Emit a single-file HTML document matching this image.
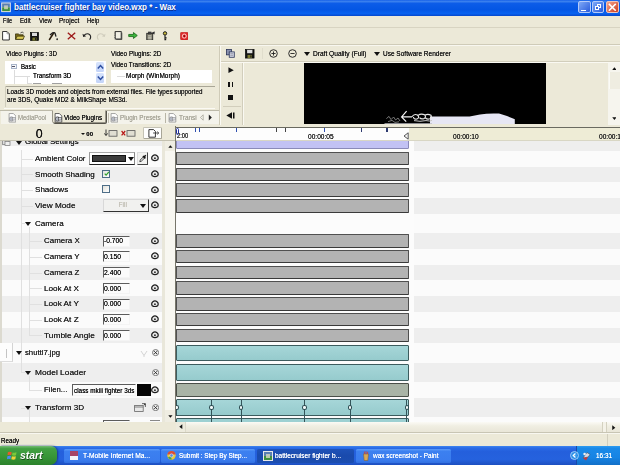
<!DOCTYPE html>
<html>
<head>
<meta charset="utf-8">
<style>
html,body{margin:0;padding:0;}
body{width:620px;height:465px;overflow:hidden;position:relative;background:#ece9d8;font-family:"Liberation Sans",sans-serif;font-size:7px;color:#1a1a1a;}
.a{position:absolute;}
.t{position:absolute;white-space:nowrap;line-height:1;font-size:7px;text-shadow:0 0 0.15px currentColor;}
#all{position:absolute;left:0;top:0;width:620px;height:465px;overflow:hidden;filter:blur(0.45px);}
.bar{position:absolute;left:176px;width:232.6px;border:1px solid #505050;border-bottom:1.4px solid #3a3a3a;border-radius:1px;background:#b3b3b3;box-sizing:border-box;}
.inp{position:absolute;left:103px;width:27px;height:11px;background:#fbfbfb;border-top:1px solid #5c5c5c;border-left:1px solid #5c5c5c;border-right:1px solid #f4f4f4;border-bottom:1px solid #f4f4f4;box-sizing:border-box;}
.lbl{position:absolute;white-space:nowrap;line-height:1;font-size:7.4px;color:#222;}
.dot{position:absolute;border-top:1px solid #e0e0e0;height:0;}
.vdot{position:absolute;border-left:1px solid #e0e0e0;width:0;}
.tri{position:absolute;width:0;height:0;border-left:3.3px solid transparent;border-right:3.3px solid transparent;border-top:4px solid #111;}
</style>
</head>
<body>
<div id="all">

<div class="a" style="left:0;top:0;width:620px;height:15.8px;background:linear-gradient(#1660e8 0%,#3a80ee 9%,#0c5ce8 22%,#0456e4 60%,#0862f0 84%,#0648cc 100%);"></div>
<svg class="a" style="left:1.1px;top:2px" width="10" height="10.6" viewBox="0 0 10 11"><rect x="0" y="0.5" width="10" height="10" fill="#e8e8e8"/><rect x="1" y="1.5" width="8" height="4" fill="#5a7fb0"/><rect x="1" y="5.5" width="8" height="4" fill="#3f8f3f"/><rect x="3" y="3.5" width="4" height="4" fill="#d8d8c0" opacity="0.8"/></svg>
<div class="t" style="left:13.70px;top:3.82px;font-size:8.2px;color:#fff;font-weight:bold;text-shadow:0.5px 0.5px 0 #0a2a8a;"><span style="display:inline-block;transform:scaleX(0.9845);transform-origin:0 0;">battlecruiser fighter bay video.wxp * - Wax</span></div>
<div class="a" style="left:578px;top:0.9px;width:12.6px;height:12.5px;border-radius:2px;box-sizing:border-box;border:0.9px solid #b4caf8;background:linear-gradient(135deg,#7ea8f6,#2a5cdc);"></div>
<div class="a" style="left:581px;top:9.6px;width:4.6px;height:1.7px;background:#fff;"></div>
<div class="a" style="left:591.7px;top:0.9px;width:12.6px;height:12.5px;border-radius:2px;box-sizing:border-box;border:0.9px solid #b4caf8;background:linear-gradient(135deg,#7ea8f6,#2a5cdc);"></div>
<div class="a" style="left:596.6px;top:4px;width:4.2px;height:3.8px;border:1px solid #fff;border-top-width:1.6px;box-sizing:border-box;"></div><div class="a" style="left:594.6px;top:6.4px;width:4.2px;height:4px;border:1px solid #fff;border-top-width:1.6px;box-sizing:border-box;background:#3a6ae0;"></div>
<div class="a" style="left:606px;top:0.9px;width:12.6px;height:12.5px;border-radius:2px;box-sizing:border-box;border:0.9px solid #f0c4b8;background:linear-gradient(135deg,#f4a48c,#cc3c1e);"></div>
<svg class="a" style="left:608px;top:2.9px" width="8.6" height="8.6" viewBox="0 0 8 8"><path d="M0.8 0.8 L7.2 7.2 M7.2 0.8 L0.8 7.2" stroke="#fff" stroke-width="1.4"/></svg>
<div class="t" style="left:3.20px;top:17.30px;font-size:7.4px;color:#222;"><span style="display:inline-block;transform:scaleX(0.7631);transform-origin:0 0;">File</span></div>
<div class="t" style="left:20.00px;top:17.30px;font-size:7.4px;color:#222;"><span style="display:inline-block;transform:scaleX(0.8313);transform-origin:0 0;">Edit</span></div>
<div class="t" style="left:38.70px;top:17.30px;font-size:7.4px;color:#222;"><span style="display:inline-block;transform:scaleX(0.8110);transform-origin:0 0;">View</span></div>
<div class="t" style="left:59.00px;top:17.30px;font-size:7.4px;color:#222;"><span style="display:inline-block;transform:scaleX(0.8857);transform-origin:0 0;">Project</span></div>
<div class="t" style="left:87.00px;top:17.30px;font-size:7.4px;color:#222;"><span style="display:inline-block;transform:scaleX(0.8147);transform-origin:0 0;">Help</span></div>
<div class="a" style="left:0;top:27px;width:620px;height:1px;background:#d8d4c2;"></div>
<div class="a" style="left:0;top:44px;width:620px;height:1px;background:#cfcbb8;"></div>
<div class="a" style="left:0;top:45px;width:620px;height:1px;background:#f8f7f0;"></div>
<svg class="a" style="left:2.4px;top:31px" width="8" height="9.6" viewBox="0 0 8 9.6"><path d="M0.6 0.5 H5 L7.3 2.8 V9 H0.6 Z" fill="#fff" stroke="#222" stroke-width="0.9"/><path d="M5 0.5 V2.8 H7.3" stroke="#555" stroke-width="0.5" fill="none"/></svg>
<svg class="a" style="left:15.4px;top:31px" width="10" height="9.4" viewBox="0 0 11 10"><path d="M0.5 9 V3 H4 L5 4 H9 V9 Z" fill="#7a6c1a" stroke="#2e2806" stroke-width="0.8"/><path d="M0.8 9 L2.5 5.5 H10.5 L8.8 9 Z" fill="#dccc58" stroke="#2e2806" stroke-width="0.7"/><path d="M6 2 Q8 0 9.5 2" stroke="#222" fill="none" stroke-width="0.8"/></svg>
<svg class="a" style="left:30px;top:31.6px" width="9" height="9" viewBox="0 0 9 9"><rect x="0.4" y="0.4" width="8.2" height="8.2" fill="#141414" stroke="#000" stroke-width="0.6"/><rect x="2" y="0.8" width="5" height="3.2" fill="#ddd"/><rect x="2.4" y="5.6" width="4.2" height="3" fill="#7a7a30"/><rect x="5" y="6" width="1.2" height="2.2" fill="#222"/></svg>
<svg class="a" style="left:47.8px;top:30.6px" width="10.5" height="10" viewBox="0 0 10.5 10"><path d="M1.2 9 L5.6 2" stroke="#2a1c0c" stroke-width="1.5"/><path d="M2 4 L4.6 1.8 Q6.6 1 7.2 2.8 L8 5.6" stroke="#1e1e1e" stroke-width="1.3" fill="none"/><circle cx="9.2" cy="8.2" r="0.95" fill="#333"/></svg>
<svg class="a" style="left:67.4px;top:31.8px" width="9" height="8" viewBox="0 0 9 8"><path d="M0.8 0.8 L8.2 7.2 M8.2 0.8 L0.8 7.2" stroke="#9c1a1a" stroke-width="1.35"/></svg>
<svg class="a" style="left:81.5px;top:31.5px" width="10" height="9" viewBox="0 0 10 9"><path d="M1.5 3.8 Q5 0.2 8 3 Q9.5 5 7.6 7.6" stroke="#222" stroke-width="1.1" fill="none"/><path d="M0.5 1.8 L1.2 5 L4.2 4.2 Z" fill="#222"/></svg>
<svg class="a" style="left:95.5px;top:31.5px" width="10" height="9" viewBox="0 0 10 9"><path d="M8.5 3.8 Q5 0.2 2 3 Q0.5 5 2.4 7.6" stroke="#d0cdbd" stroke-width="1.1" fill="none"/><path d="M9.5 1.8 L8.8 5 L5.8 4.2 Z" fill="#d0cdbd"/></svg>
<svg class="a" style="left:113.6px;top:31px" width="9" height="9" viewBox="0 0 9 9"><rect x="1.2" y="0.6" width="6" height="7.4" fill="#f1efe4" stroke="#222" stroke-width="0.9"/><path d="M7.8 1.6 V8.6 H2.2" stroke="#333" stroke-width="0.8" fill="none"/><path d="M0.4 2 H1.2 M0.4 4.2 H1.2 M0.4 6.4 H1.2" stroke="#222" stroke-width="0.7"/></svg>
<svg class="a" style="left:127.6px;top:32.2px" width="10" height="7" viewBox="0 0 11 8"><path d="M0.6 2.8 H6 V0.6 L10.4 4 L6 7.4 V5.2 H0.6 Z" fill="#3cb43c" stroke="#146414" stroke-width="0.9"/></svg>
<svg class="a" style="left:146.4px;top:30.6px" width="9.6" height="9.6" viewBox="0 0 10 10"><rect x="0.8" y="2.4" width="6.2" height="7" fill="#8c8a78" stroke="#222" stroke-width="0.9"/><rect x="2.4" y="1" width="3" height="2.2" fill="#444" stroke="#222" stroke-width="0.5"/><path d="M2.2 5 H5.6 M2.2 6.6 H5.6 M2.2 8.2 H5.6" stroke="#e8e8e0" stroke-width="0.6"/><path d="M6.4 1.4 L9.2 0.6 L8.8 3.6 L7.4 3 Z" fill="#333"/></svg>
<svg class="a" style="left:162.4px;top:30.6px" width="6" height="10" viewBox="0 0 6 10"><circle cx="3" cy="2.4" r="1.7" fill="#c8b838" stroke="#1a1a1a" stroke-width="1"/><path d="M3 4.2 V9.2 M3 6.8 H4.6 M3 8.6 H4.2" stroke="#1a1a1a" stroke-width="1.15"/></svg>
<svg class="a" style="left:179.8px;top:31.6px" width="8.6" height="8.2" viewBox="0 0 10 10"><rect x="0.3" y="0.3" width="9.4" height="9.4" rx="1.4" fill="#e22a2a" stroke="#a01414" stroke-width="0.6"/><circle cx="5" cy="5" r="2.5" fill="none" stroke="#fff" stroke-width="0.9"/><circle cx="5" cy="5" r="1" fill="#6a0000"/></svg><div class="a" style="left:219px;top:46px;width:1px;height:79px;background:#cfcbb8;"></div>
<div class="a" style="left:220px;top:46px;width:1px;height:79px;background:#fbfaf4;"></div>
<div class="t" style="left:6.40px;top:49.60px;font-size:7.4px;color:#1a1a1a;"><span style="display:inline-block;transform:scaleX(0.8412);transform-origin:0 0;">Video Plugins : 3D</span></div>
<div class="t" style="left:111.00px;top:49.60px;font-size:7.4px;color:#1a1a1a;"><span style="display:inline-block;transform:scaleX(0.8604);transform-origin:0 0;">Video Plugins: 2D</span></div>
<div class="t" style="left:111.00px;top:60.80px;font-size:7.4px;color:#1a1a1a;"><span style="display:inline-block;transform:scaleX(0.8618);transform-origin:0 0;">Video Transitions: 2D</span></div>
<div class="a" style="left:5.3px;top:61px;width:101px;height:23.2px;background:#fff;"></div>
<div class="a" style="left:11px;top:64px;width:5.6px;height:5.4px;border:0.9px solid #a8b4c8;box-sizing:border-box;background:#f4f6fa;"></div>
<div class="a" style="left:12.4px;top:66.3px;width:2.8px;height:0.9px;background:#556;"></div>
<div class="t" style="left:20.60px;top:62.55px;font-size:7.5px;color:#111;"><span style="display:inline-block;transform:scaleX(0.8124);transform-origin:0 0;">Basic</span></div>
<div class="vdot" style="left:13.6px;top:70px;height:13.6px;border-color:#dcdcdc;"></div>
<div class="dot" style="left:14px;top:76.4px;width:16px;border-color:#dcdcdc;"></div>
<div class="dot" style="left:27px;top:82.6px;width:5px;border-color:#dcdcdc;"></div>
<div class="vdot" style="left:26.6px;top:77px;height:6px;border-color:#dcdcdc;"></div>
<div class="t" style="left:32.60px;top:72.25px;font-size:7.5px;color:#111;"><span style="display:inline-block;transform:scaleX(0.8427);transform-origin:0 0;">Transform 3D</span></div>
<div class="a" style="left:33px;top:82.6px;width:8px;height:1.2px;background:#777;opacity:.7"></div><div class="a" style="left:52px;top:82.6px;width:10px;height:1.2px;background:#777;opacity:.7"></div>
<div class="a" style="left:96.2px;top:61.8px;width:7.9px;height:10px;background:linear-gradient(#d8e4fc,#c2d3f8);border-radius:1.5px;"></div>
<div class="a" style="left:96.2px;top:72.6px;width:7.9px;height:10.8px;background:linear-gradient(#d8e4fc,#c2d3f8);border-radius:1.5px;"></div>
<svg class="a" style="left:96.7px;top:64px" width="7" height="6" viewBox="0 0 7 6"><path d="M0.8 4.6 L3.5 1.6 L6.2 4.6" stroke="#2e4fa0" stroke-width="1.5" fill="none"/></svg>
<svg class="a" style="left:96.7px;top:75.2px" width="7" height="6" viewBox="0 0 7 6"><path d="M0.8 1.4 L3.5 4.4 L6.2 1.4" stroke="#2e4fa0" stroke-width="1.5" fill="none"/></svg>
<div class="a" style="left:111.3px;top:70px;width:101px;height:12.6px;background:#fff;"></div>
<div class="dot" style="left:117px;top:75.6px;width:8px;border-color:#dcdcdc;"></div>
<div class="t" style="left:126.00px;top:71.70px;font-size:7.4px;color:#111;"><span style="display:inline-block;transform:scaleX(0.8755);transform-origin:0 0;">Morph (WinMorph)</span></div>
<div class="a" style="left:5px;top:86.4px;width:210px;height:1px;background:#a9a696;"></div>
<div class="a" style="left:5px;top:86.4px;width:1px;height:21px;background:#cfccbb;"></div>
<div class="a" style="left:4px;top:107.5px;width:211px;height:1px;background:#fbfaf4;"></div>
<div class="t" style="left:6.60px;top:88.20px;font-size:7.4px;color:#1a1a1a;"><span style="display:inline-block;transform:scaleX(0.8557);transform-origin:0 0;">Loads 3D models and objects from external files. File types supported</span></div>
<div class="t" style="left:6.60px;top:96.20px;font-size:7.4px;color:#1a1a1a;"><span style="display:inline-block;transform:scaleX(0.8731);transform-origin:0 0;">are 3DS, Quake MD2 &amp; MilkShape MS3d.</span></div>
<div class="a" style="left:1px;top:110.4px;width:217.5px;height:14px;background:#f4f3eb;"></div>
<div class="a" style="left:0px;top:109.8px;width:219px;height:1px;background:#bdbaa9;"></div>
<svg class="a" style="left:7.6px;top:113.2px" width="8.6" height="9.6" viewBox="0 0 8 9"><path d="M1 0.5 H5 L7.3 2.8 V8.5 H1 Z" fill="#fff" stroke="#8a8a8a" stroke-width="0.7"/><circle cx="3.2" cy="5.6" r="2" fill="#b4b8c4" stroke="#8a8a8a" stroke-width="0.6"/><rect x="4.2" y="4" width="2.6" height="2.6" fill="#d8dae0" stroke="#8a8a8a" stroke-width="0.5"/></svg>
<div class="t" style="left:17.70px;top:113.71px;font-size:7.2px;color:#a8a699;"><span style="display:inline-block;transform:scaleX(0.8318);transform-origin:0 0;">MediaPool</span></div>
<div class="a" style="left:51.5px;top:109.6px;width:54.5px;height:13.4px;background:#ece9d8;border:1px solid #9a978a;border-top:1px solid #ece9d8;box-sizing:border-box;border-radius:0 0 2px 2px;box-shadow:1px 1px 0 #55534a;"></div>
<svg class="a" style="left:54.4px;top:113.2px" width="8.6" height="9.6" viewBox="0 0 8 9"><path d="M1 0.5 H5 L7.3 2.8 V8.5 H1 Z" fill="#fff" stroke="#333" stroke-width="0.7"/><circle cx="3.2" cy="5.6" r="2" fill="#b4b8c4" stroke="#333" stroke-width="0.6"/><rect x="4.2" y="4" width="2.6" height="2.6" fill="#d8dae0" stroke="#333" stroke-width="0.5"/></svg>
<div class="t" style="left:63.90px;top:113.71px;font-size:7.2px;color:#111;"><span style="display:inline-block;transform:scaleX(0.8679);transform-origin:0 0;">Video Plugins</span></div>
<svg class="a" style="left:109.5px;top:113.2px" width="8.6" height="9.6" viewBox="0 0 8 9"><path d="M1 0.5 H5 L7.3 2.8 V8.5 H1 Z" fill="#fff" stroke="#8a8a8a" stroke-width="0.7"/><circle cx="3.2" cy="5.6" r="2" fill="#b4b8c4" stroke="#8a8a8a" stroke-width="0.6"/><rect x="4.2" y="4" width="2.6" height="2.6" fill="#d8dae0" stroke="#8a8a8a" stroke-width="0.5"/></svg>
<div class="t" style="left:119.80px;top:113.71px;font-size:7.2px;color:#a8a699;"><span style="display:inline-block;transform:scaleX(0.8788);transform-origin:0 0;">Plugin Presets</span></div>
<svg class="a" style="left:168px;top:113.2px" width="8.6" height="9.6" viewBox="0 0 8 9"><path d="M1 0.5 H5 L7.3 2.8 V8.5 H1 Z" fill="#fff" stroke="#8a8a8a" stroke-width="0.7"/><circle cx="3.2" cy="5.6" r="2" fill="#b4b8c4" stroke="#8a8a8a" stroke-width="0.6"/><rect x="4.2" y="4" width="2.6" height="2.6" fill="#d8dae0" stroke="#8a8a8a" stroke-width="0.5"/></svg>
<div class="t" style="left:179.20px;top:113.71px;font-size:7.2px;color:#a8a699;"><span style="display:inline-block;transform:scaleX(0.9018);transform-origin:0 0;">Transi</span></div>
<div class="a" style="left:164.6px;top:112.5px;width:1px;height:10px;background:#b8b5a6;"></div>
<div class="a" style="left:107.6px;top:112.5px;width:1px;height:10px;background:#c4c1b2;"></div>
<svg class="a" style="left:199px;top:114.2px" width="16" height="7" viewBox="0 0 16 7"><path d="M4.2 0.8 L1.4 3.5 L4.2 6.2 Z" fill="none" stroke="#a8a699" stroke-width="0.8"/><path d="M9.8 0.5 L12.8 3.5 L9.8 6.5 Z" fill="#222"/></svg>
<div class="a" style="left:221px;top:61px;width:399px;height:1px;background:#d2cebc;"></div>
<div class="a" style="left:221px;top:62px;width:399px;height:1px;background:#faf9f2;"></div>
<div class="a" style="left:242px;top:63px;width:1px;height:62px;background:#d2cebc;"></div>
<div class="a" style="left:243px;top:63px;width:1px;height:62px;background:#faf9f2;"></div>
<div class="a" style="left:223px;top:105.5px;width:18px;height:1px;background:#d2cebc;"></div>
<svg class="a" style="left:226.4px;top:49px" width="9" height="9" viewBox="0 0 10 10"><rect x="0.5" y="0.5" width="5.6" height="6" fill="#8a92b0" stroke="#2a3458" stroke-width="0.9"/><rect x="3.6" y="3.2" width="5.6" height="6" fill="#d4d8e6" stroke="#2a3458" stroke-width="0.9"/><path d="M4.8 5.2 H8 M4.8 7 H8" stroke="#556" stroke-width="0.5"/></svg>
<svg class="a" style="left:245px;top:49px" width="9.5" height="9.5" viewBox="0 0 9 9"><rect x="0.4" y="0.4" width="8.2" height="8.2" fill="#141414" stroke="#000" stroke-width="0.6"/><rect x="2" y="0.8" width="5" height="3.2" fill="#ddd"/><rect x="2.4" y="5.6" width="4.2" height="3" fill="#7a7a30"/><rect x="5" y="6" width="1.2" height="2.2" fill="#222"/></svg>
<div class="a" style="left:261.5px;top:48px;width:1px;height:11px;background:#e0ddcc;"></div>
<svg class="a" style="left:269px;top:48.6px" width="9" height="9" viewBox="0 0 9 9"><circle cx="4.5" cy="4.5" r="3.8" fill="none" stroke="#222" stroke-width="0.95"/><path d="M2.4 4.5 H6.6 M4.5 2.4 V6.6" stroke="#222" stroke-width="0.9"/></svg>
<svg class="a" style="left:287.6px;top:48.6px" width="9" height="9" viewBox="0 0 9 9"><circle cx="4.5" cy="4.5" r="3.8" fill="none" stroke="#222" stroke-width="0.95"/><path d="M2.4 4.5 H6.6" stroke="#222" stroke-width="0.9"/></svg>
<div class="tri" style="left:303.8px;top:52px;"></div>
<div class="t" style="left:312.50px;top:49.66px;font-size:7.3px;color:#1a1a1a;"><span style="display:inline-block;transform:scaleX(0.9034);transform-origin:0 0;">Draft Quality (Full)</span></div>
<div class="tri" style="left:373.5px;top:52px;"></div>
<div class="t" style="left:383.00px;top:49.66px;font-size:7.3px;color:#1a1a1a;"><span style="display:inline-block;transform:scaleX(0.8914);transform-origin:0 0;">Use Software Renderer</span></div>
<svg class="a" style="left:228px;top:67.4px" width="6.2" height="6.4" viewBox="0 0 7 7"><path d="M0.5 0.3 L6.5 3.5 L0.5 6.7 Z" fill="#111"/></svg>
<div class="a" style="left:228px;top:81.5px;width:1.6px;height:5.5px;background:#111;"></div><div class="a" style="left:231.8px;top:81.5px;width:1.6px;height:5.5px;background:#111;"></div>
<div class="a" style="left:228.2px;top:94.5px;width:5.3px;height:5px;background:#111;"></div>
<svg class="a" style="left:226px;top:111.5px" width="9" height="7" viewBox="0 0 9 7"><path d="M6 0.3 L0.3 3.5 L6 6.7 Z" fill="#111"/><rect x="7" y="0.5" width="1.5" height="6" fill="#111"/></svg>
<div class="a" style="left:304.3px;top:62.8px;width:242.2px;height:61.2px;background:#000;"></div>
<svg class="a" style="left:380px;top:110px" width="140" height="14" viewBox="0 0 140 14"><path d="M50 6.4 L89.6 6.4 L100 4.4 Q108 3.2 119 3.6 L127 6 L133.7 8.7 L134.8 9.2 L134.8 14 L50 14 Z" fill="#e6e6f4"/><path d="M4.5 13.7 L52 13.7" stroke="#bdbdc4" stroke-width="0.9"/><path d="M26.6 1.2 L21.6 6.9 L26.2 11.6 M21.8 6.9 L32 6.9" stroke="#f4f4f4" stroke-width="1.2" fill="none"/><path d="M32 6.8 Q34 3.4 37.5 5 Q40 7.6 37 9 Q33.6 9.6 33.4 7 M38 5.4 Q41 3.2 44.6 4.8 Q46.6 7 44 8.6 Q41 9.6 39.6 7.6 M45 5 Q48 3.6 51 5.2 Q52 7.4 50 8.8 Q47 9.6 45.6 8" stroke="#e8e8e8" stroke-width="1.15" fill="none"/><path d="M34 10.6 Q40 12 46 10.6 Q50 11.6 52 10.4" stroke="#c8c8c8" stroke-width="1" fill="none"/><path d="M6.4 8.6 L9 6.4 L11 9.6 L13.6 7 L15.6 10 L18 8 L20 11 M8 11.6 L12 10.4 L15 12.4 L19 11.8" stroke="#8c8c8c" stroke-width="0.85" fill="none"/></svg>
<div class="a" style="left:608px;top:63px;width:12px;height:61.5px;background:#f6f5ee;"></div>
<div class="a" style="left:609px;top:72.2px;width:10px;height:17px;background:#efede1;border-left:1px solid #fbfbf6;"></div>
<svg class="a" style="left:611.6px;top:66.6px" width="4.8" height="3.2" viewBox="0 0 6 4"><path d="M3 0.3 L5.7 3.7 H0.3 Z" fill="#111"/></svg>
<svg class="a" style="left:611.6px;top:117.2px" width="4.8" height="3.2" viewBox="0 0 6 4"><path d="M3 3.7 L5.7 0.3 H0.3 Z" fill="#111"/></svg><div class="a" style="left:0;top:125px;width:620px;height:2.5px;background:#ece9d8;"></div>
<div class="a" style="left:0;top:135.00px;width:162px;height:11.00px;background:#eeeeee;"></div>
<div class="a" style="left:176px;top:135.00px;width:444px;height:15.80px;background:#eeeeee;"></div>
<div class="a" style="left:0;top:146.00px;width:162px;height:20.54px;background:#fbfbfb;"></div>
<div class="a" style="left:176px;top:150.80px;width:444px;height:15.74px;background:#fbfbfb;"></div>
<div class="a" style="left:0;top:166.54px;width:162px;height:15.74px;background:#eeeeee;"></div>
<div class="a" style="left:176px;top:166.54px;width:444px;height:15.74px;background:#eeeeee;"></div>
<div class="a" style="left:0;top:182.28px;width:162px;height:15.74px;background:#fbfbfb;"></div>
<div class="a" style="left:176px;top:182.28px;width:444px;height:15.74px;background:#fbfbfb;"></div>
<div class="a" style="left:0;top:198.02px;width:162px;height:15.74px;background:#eeeeee;"></div>
<div class="a" style="left:176px;top:198.02px;width:444px;height:15.74px;background:#eeeeee;"></div>
<div class="a" style="left:0;top:213.76px;width:162px;height:19.40px;background:#fbfbfb;"></div>
<div class="a" style="left:176px;top:213.76px;width:444px;height:19.40px;background:#fbfbfb;"></div>
<div class="a" style="left:0;top:233.16px;width:162px;height:15.74px;background:#eeeeee;"></div>
<div class="a" style="left:176px;top:233.16px;width:444px;height:15.74px;background:#eeeeee;"></div>
<div class="a" style="left:0;top:248.90px;width:162px;height:15.74px;background:#fbfbfb;"></div>
<div class="a" style="left:176px;top:248.90px;width:444px;height:15.74px;background:#fbfbfb;"></div>
<div class="a" style="left:0;top:264.64px;width:162px;height:15.74px;background:#eeeeee;"></div>
<div class="a" style="left:176px;top:264.64px;width:444px;height:15.74px;background:#eeeeee;"></div>
<div class="a" style="left:0;top:280.38px;width:162px;height:15.74px;background:#fbfbfb;"></div>
<div class="a" style="left:176px;top:280.38px;width:444px;height:15.74px;background:#fbfbfb;"></div>
<div class="a" style="left:0;top:296.12px;width:162px;height:15.74px;background:#eeeeee;"></div>
<div class="a" style="left:176px;top:296.12px;width:444px;height:15.74px;background:#eeeeee;"></div>
<div class="a" style="left:0;top:311.86px;width:162px;height:15.74px;background:#fbfbfb;"></div>
<div class="a" style="left:176px;top:311.86px;width:444px;height:15.74px;background:#fbfbfb;"></div>
<div class="a" style="left:0;top:327.60px;width:162px;height:15.74px;background:#eeeeee;"></div>
<div class="a" style="left:176px;top:327.60px;width:444px;height:15.74px;background:#eeeeee;"></div>
<div class="a" style="left:0;top:343.34px;width:162px;height:19.40px;background:#fbfbfb;"></div>
<div class="a" style="left:176px;top:343.34px;width:444px;height:19.40px;background:#fbfbfb;"></div>
<div class="a" style="left:0;top:362.74px;width:162px;height:19.40px;background:#eeeeee;"></div>
<div class="a" style="left:176px;top:362.74px;width:444px;height:19.40px;background:#eeeeee;"></div>
<div class="a" style="left:0;top:382.14px;width:162px;height:15.74px;background:#fbfbfb;"></div>
<div class="a" style="left:176px;top:382.14px;width:444px;height:15.74px;background:#fbfbfb;"></div>
<div class="a" style="left:0;top:397.88px;width:162px;height:19.40px;background:#eeeeee;"></div>
<div class="a" style="left:176px;top:397.88px;width:444px;height:19.40px;background:#eeeeee;"></div>
<div class="a" style="left:0;top:417.28px;width:162px;height:5.02px;background:#fbfbfb;"></div>
<div class="a" style="left:176px;top:417.28px;width:444px;height:5.02px;background:#fbfbfb;"></div>
<div class="a" style="left:176px;top:140.5px;width:238px;height:281.8px;background:#fcfcfc;"></div>
<div class="a" style="left:0;top:140px;width:1.5px;height:282.3px;background:#dcdad0;"></div>
<div class="vdot" style="left:20.5px;top:150px;height:222px;"></div>
<div class="t" style="left:25.30px;top:138.03px;font-size:8.1px;color:#222;"><span style="display:inline-block;transform:scaleX(0.9776);transform-origin:0 0;">Global Settings</span></div>
<div class="tri" style="left:16.2px;top:140.6px;"></div>
<svg class="a" style="left:2px;top:139px" width="9" height="7" viewBox="0 0 9 7"><rect x="0.5" y="0.5" width="6" height="5" fill="#ddd" stroke="#777" stroke-width="0.7"/><rect x="3" y="2.5" width="5" height="4" fill="#eee" stroke="#777" stroke-width="0.7"/></svg>
<div class="bar" style="top:137px;height:12.3px;background:#c2c2f4;border-color:#8a8ab8;"></div>
<div class="bar" style="top:151.90px;height:13.4px;"></div>
<div class="dot" style="left:21px;top:158.67px;width:12px;"></div>
<div class="t" style="left:34.50px;top:155.00px;font-size:8.1px;color:#262626;"><span style="display:inline-block;transform:scaleX(0.9840);transform-origin:0 0;">Ambient Color</span></div>
<svg class="a" style="left:150.90px;top:154.27px" width="7.9" height="7.9" viewBox="0 0 8.4 8.4"><path d="M1.35 6.2 A3.35 3.35 0 1 1 7.05 6.2 Q4.2 7.9 1.35 6.2 Z" fill="#ececec" stroke="#1c1c1c" stroke-width="1.3" stroke-linejoin="round"/><circle cx="4.2" cy="4.4" r="1.0" fill="#2a2a2a"/></svg>
<div class="a" style="left:89px;top:152.27px;width:46.4px;height:12.4px;background:#fff;border:1px solid #888;border-top-color:#aaa;border-left-color:#999;border-bottom:1.3px solid #222;box-sizing:border-box;"></div>
<div class="a" style="left:92px;top:154.97px;width:34.4px;height:6.8px;background:#3c3c3c;border:0.6px solid #111;box-sizing:border-box;"></div>
<div class="tri" style="left:127.50000000000001px;top:156.77px;"></div>
<div class="a" style="left:136.6px;top:152.07px;width:11.8px;height:12.6px;background:#f2f2f0;border:1px solid #ddd;border-right:1.2px solid #444;border-bottom:1.2px solid #444;box-sizing:border-box;"></div>
<svg class="a" style="left:138.5px;top:154.47px" width="8" height="8.5" viewBox="0 0 8 8.5"><path d="M0.8 7.8 L1.2 6 L4.4 2.8 L5.6 4 L2.4 7.2 Z" fill="#ddd" stroke="#111" stroke-width="0.7"/><path d="M4 2 L6.4 4.4 M5 3 L6.8 1.2" stroke="#111" stroke-width="1.5"/></svg>
<div class="bar" style="top:167.64px;height:13.4px;"></div>
<div class="dot" style="left:21px;top:174.41px;width:12px;"></div>
<div class="t" style="left:34.50px;top:170.74px;font-size:8.1px;color:#262626;"><span style="display:inline-block;transform:scaleX(1.0001);transform-origin:0 0;">Smooth Shading</span></div>
<svg class="a" style="left:150.90px;top:170.01px" width="7.9" height="7.9" viewBox="0 0 8.4 8.4"><path d="M1.35 6.2 A3.35 3.35 0 1 1 7.05 6.2 Q4.2 7.9 1.35 6.2 Z" fill="#ececec" stroke="#1c1c1c" stroke-width="1.3" stroke-linejoin="round"/><circle cx="4.2" cy="4.4" r="1.0" fill="#2a2a2a"/></svg>
<div class="a" style="left:102.4px;top:169.71px;width:8px;height:8px;border:0.9px solid #4e6e88;box-sizing:border-box;background:linear-gradient(135deg,#e2e2dc,#fff);"></div>
<svg class="a" style="left:103.7px;top:170.91px" width="5.6" height="5.6" viewBox="0 0 5.6 5.6"><path d="M0.7 2.6 L2.1 4.2 L4.9 1" stroke="#2fa02f" stroke-width="1.2" fill="none"/></svg>
<div class="bar" style="top:183.38px;height:13.4px;"></div>
<div class="dot" style="left:21px;top:190.15px;width:12px;"></div>
<div class="t" style="left:34.50px;top:186.48px;font-size:8.1px;color:#262626;"><span style="display:inline-block;transform:scaleX(0.9963);transform-origin:0 0;">Shadows</span></div>
<svg class="a" style="left:150.90px;top:185.75px" width="7.9" height="7.9" viewBox="0 0 8.4 8.4"><path d="M1.35 6.2 A3.35 3.35 0 1 1 7.05 6.2 Q4.2 7.9 1.35 6.2 Z" fill="#ececec" stroke="#1c1c1c" stroke-width="1.3" stroke-linejoin="round"/><circle cx="4.2" cy="4.4" r="1.0" fill="#2a2a2a"/></svg>
<div class="a" style="left:102.4px;top:185.45px;width:8px;height:8px;border:0.9px solid #4e6e88;box-sizing:border-box;background:linear-gradient(135deg,#e2e2dc,#fff);"></div>
<div class="bar" style="top:199.12px;height:13.4px;"></div>
<div class="dot" style="left:21px;top:205.89px;width:12px;"></div>
<div class="t" style="left:34.50px;top:202.22px;font-size:8.1px;color:#262626;"><span style="display:inline-block;transform:scaleX(1.0144);transform-origin:0 0;">View Mode</span></div>
<svg class="a" style="left:150.90px;top:201.49px" width="7.9" height="7.9" viewBox="0 0 8.4 8.4"><path d="M1.35 6.2 A3.35 3.35 0 1 1 7.05 6.2 Q4.2 7.9 1.35 6.2 Z" fill="#ececec" stroke="#1c1c1c" stroke-width="1.3" stroke-linejoin="round"/><circle cx="4.2" cy="4.4" r="1.0" fill="#2a2a2a"/></svg>
<div class="a" style="left:103px;top:199.49px;width:46px;height:12.2px;background:#f1f1ef;border:1px solid #d8d8d8;border-right:1.2px solid #333;border-bottom:1.3px solid #333;box-sizing:border-box;"></div>
<div class="t" style="left:118.5px;top:202.29px;font-size:6.6px;color:#c4c2b8;">Fill</div>
<div class="tri" style="left:140.0px;top:203.99000000000004px;"></div>
<div class="dot" style="left:21px;top:223.46px;width:4px;"></div>
<div class="tri" style="left:25.2px;top:221.56000000000003px;"></div>
<div class="t" style="left:34.50px;top:219.79px;font-size:8.1px;color:#262626;"><span style="display:inline-block;transform:scaleX(0.9997);transform-origin:0 0;">Camera</span></div>
<div class="vdot" style="left:28.5px;top:227.46px;height:107.54px;"></div>
<div class="bar" style="top:234.26px;height:13.4px;"></div>
<div class="dot" style="left:29px;top:241.03px;width:13px;"></div>
<div class="t" style="left:44.10px;top:237.36px;font-size:8.1px;color:#262626;"><span style="display:inline-block;transform:scaleX(0.9791);transform-origin:0 0;">Camera X</span></div>
<div class="inp" style="top:235.73px;"></div>
<div class="t" style="left:104.40px;top:237.44px;font-size:7.2px;color:#111;"><span style="display:inline-block;transform:scaleX(0.9306);transform-origin:0 0;">-0.700</span></div>
<svg class="a" style="left:150.90px;top:236.63px" width="7.9" height="7.9" viewBox="0 0 8.4 8.4"><path d="M1.35 6.2 A3.35 3.35 0 1 1 7.05 6.2 Q4.2 7.9 1.35 6.2 Z" fill="#ececec" stroke="#1c1c1c" stroke-width="1.3" stroke-linejoin="round"/><circle cx="4.2" cy="4.4" r="1.0" fill="#2a2a2a"/></svg>
<div class="bar" style="top:250.00px;height:13.4px;"></div>
<div class="dot" style="left:29px;top:256.77px;width:13px;"></div>
<div class="t" style="left:44.10px;top:253.10px;font-size:8.1px;color:#262626;"><span style="display:inline-block;transform:scaleX(0.9830);transform-origin:0 0;">Camera Y</span></div>
<div class="inp" style="top:251.47px;"></div>
<div class="t" style="left:104.40px;top:253.18px;font-size:7.2px;color:#111;"><span style="display:inline-block;transform:scaleX(0.9435);transform-origin:0 0;">0.150</span></div>
<svg class="a" style="left:150.90px;top:252.37px" width="7.9" height="7.9" viewBox="0 0 8.4 8.4"><path d="M1.35 6.2 A3.35 3.35 0 1 1 7.05 6.2 Q4.2 7.9 1.35 6.2 Z" fill="#ececec" stroke="#1c1c1c" stroke-width="1.3" stroke-linejoin="round"/><circle cx="4.2" cy="4.4" r="1.0" fill="#2a2a2a"/></svg>
<div class="bar" style="top:265.74px;height:13.4px;"></div>
<div class="dot" style="left:29px;top:272.51px;width:13px;"></div>
<div class="t" style="left:44.10px;top:268.84px;font-size:8.1px;color:#262626;"><span style="display:inline-block;transform:scaleX(0.9859);transform-origin:0 0;">Camera Z</span></div>
<div class="inp" style="top:267.21px;"></div>
<div class="t" style="left:104.40px;top:268.92px;font-size:7.2px;color:#111;"><span style="display:inline-block;transform:scaleX(0.9435);transform-origin:0 0;">2.400</span></div>
<svg class="a" style="left:150.90px;top:268.11px" width="7.9" height="7.9" viewBox="0 0 8.4 8.4"><path d="M1.35 6.2 A3.35 3.35 0 1 1 7.05 6.2 Q4.2 7.9 1.35 6.2 Z" fill="#ececec" stroke="#1c1c1c" stroke-width="1.3" stroke-linejoin="round"/><circle cx="4.2" cy="4.4" r="1.0" fill="#2a2a2a"/></svg>
<div class="bar" style="top:281.48px;height:13.4px;"></div>
<div class="dot" style="left:29px;top:288.25px;width:13px;"></div>
<div class="t" style="left:44.10px;top:284.58px;font-size:8.1px;color:#262626;"><span style="display:inline-block;transform:scaleX(1.0065);transform-origin:0 0;">Look At X</span></div>
<div class="inp" style="top:282.95px;"></div>
<div class="t" style="left:104.40px;top:284.66px;font-size:7.2px;color:#111;"><span style="display:inline-block;transform:scaleX(0.9435);transform-origin:0 0;">0.000</span></div>
<svg class="a" style="left:150.90px;top:283.85px" width="7.9" height="7.9" viewBox="0 0 8.4 8.4"><path d="M1.35 6.2 A3.35 3.35 0 1 1 7.05 6.2 Q4.2 7.9 1.35 6.2 Z" fill="#ececec" stroke="#1c1c1c" stroke-width="1.3" stroke-linejoin="round"/><circle cx="4.2" cy="4.4" r="1.0" fill="#2a2a2a"/></svg>
<div class="bar" style="top:297.22px;height:13.4px;"></div>
<div class="dot" style="left:29px;top:303.99px;width:13px;"></div>
<div class="t" style="left:44.10px;top:300.32px;font-size:8.1px;color:#262626;"><span style="display:inline-block;transform:scaleX(1.0108);transform-origin:0 0;">Look At Y</span></div>
<div class="inp" style="top:298.69px;"></div>
<div class="t" style="left:104.40px;top:300.40px;font-size:7.2px;color:#111;"><span style="display:inline-block;transform:scaleX(0.9435);transform-origin:0 0;">0.000</span></div>
<svg class="a" style="left:150.90px;top:299.59px" width="7.9" height="7.9" viewBox="0 0 8.4 8.4"><path d="M1.35 6.2 A3.35 3.35 0 1 1 7.05 6.2 Q4.2 7.9 1.35 6.2 Z" fill="#ececec" stroke="#1c1c1c" stroke-width="1.3" stroke-linejoin="round"/><circle cx="4.2" cy="4.4" r="1.0" fill="#2a2a2a"/></svg>
<div class="bar" style="top:312.96px;height:13.4px;"></div>
<div class="dot" style="left:29px;top:319.73px;width:13px;"></div>
<div class="t" style="left:44.10px;top:316.06px;font-size:8.1px;color:#262626;"><span style="display:inline-block;transform:scaleX(1.0140);transform-origin:0 0;">Look At Z</span></div>
<div class="inp" style="top:314.43px;"></div>
<div class="t" style="left:104.40px;top:316.14px;font-size:7.2px;color:#111;"><span style="display:inline-block;transform:scaleX(0.9435);transform-origin:0 0;">0.000</span></div>
<svg class="a" style="left:150.90px;top:315.33px" width="7.9" height="7.9" viewBox="0 0 8.4 8.4"><path d="M1.35 6.2 A3.35 3.35 0 1 1 7.05 6.2 Q4.2 7.9 1.35 6.2 Z" fill="#ececec" stroke="#1c1c1c" stroke-width="1.3" stroke-linejoin="round"/><circle cx="4.2" cy="4.4" r="1.0" fill="#2a2a2a"/></svg>
<div class="bar" style="top:328.70px;height:13.4px;"></div>
<div class="dot" style="left:29px;top:335.47px;width:13px;"></div>
<div class="t" style="left:44.10px;top:331.80px;font-size:8.1px;color:#262626;"><span style="display:inline-block;transform:scaleX(1.0339);transform-origin:0 0;">Tumble Angle</span></div>
<div class="inp" style="top:330.17px;"></div>
<div class="t" style="left:104.40px;top:331.88px;font-size:7.2px;color:#111;"><span style="display:inline-block;transform:scaleX(0.9435);transform-origin:0 0;">0.000</span></div>
<svg class="a" style="left:150.90px;top:331.07px" width="7.9" height="7.9" viewBox="0 0 8.4 8.4"><path d="M1.35 6.2 A3.35 3.35 0 1 1 7.05 6.2 Q4.2 7.9 1.35 6.2 Z" fill="#ececec" stroke="#1c1c1c" stroke-width="1.3" stroke-linejoin="round"/><circle cx="4.2" cy="4.4" r="1.0" fill="#2a2a2a"/></svg>
<div class="bar" style="top:344.94px;height:16.2px;background:linear-gradient(#a6d6d8,#96cbcd);border-color:#3c5c5e;"></div>
<div class="a" style="left:0;top:343.34px;width:13.4px;height:18.80px;background:#fdfdfd;border-right:1px solid #d4d4d4;border-bottom:1px solid #dcdcdc;box-sizing:border-box;"></div>
<div class="a" style="left:5.8px;top:348.54px;width:1px;height:9px;background:#c4c4c4;"></div>
<div class="tri" style="left:15.5px;top:351.1400000000001px;"></div>
<div class="t" style="left:25.30px;top:349.37px;font-size:8.1px;color:#262626;"><span style="display:inline-block;transform:scaleX(0.9506);transform-origin:0 0;">shuttl7.jpg</span></div>
<svg class="a" style="left:140px;top:349.54px" width="8" height="7" viewBox="0 0 8 7"><path d="M1 1 L4 5.5 L7 1 M4 5.5 V7" stroke="#cfcfcf" stroke-width="0.9" fill="none"/></svg>
<svg class="a" style="left:151.70000000000002px;top:349.44000000000005px" width="7.2" height="7.2" viewBox="0 0 7.2 7.2"><circle cx="3.6" cy="3.6" r="3.05" fill="#f2f2f2" stroke="#6a6a6a" stroke-width="0.9"/><path d="M2.2 2.2 L5 5 M5 2.2 L2.2 5" stroke="#222" stroke-width="0.9"/></svg>
<div class="bar" style="top:364.34px;height:16.2px;background:linear-gradient(#a6d6d8,#96cbcd);border-color:#3c5c5e;"></div>
<div class="dot" style="left:21px;top:372.44px;width:4px;"></div>
<div class="tri" style="left:25.2px;top:370.5400000000001px;"></div>
<div class="t" style="left:34.50px;top:368.77px;font-size:8.1px;color:#262626;"><span style="display:inline-block;transform:scaleX(1.0336);transform-origin:0 0;">Model Loader</span></div>
<svg class="a" style="left:151.70000000000002px;top:368.84000000000003px" width="7.2" height="7.2" viewBox="0 0 7.2 7.2"><circle cx="3.6" cy="3.6" r="3.05" fill="#f2f2f2" stroke="#6a6a6a" stroke-width="0.9"/><path d="M2.2 2.2 L5 5 M5 2.2 L2.2 5" stroke="#222" stroke-width="0.9"/></svg>
<div class="vdot" style="left:28.5px;top:376.44px;height:14px;"></div>
<div class="bar" style="top:383.24px;height:13.4px;background:#a9b4a6;border-color:#4a4f48;"></div>
<div class="dot" style="left:29px;top:390.01px;width:13px;"></div>
<div class="t" style="left:44.10px;top:386.34px;font-size:8.1px;color:#262626;"><span style="display:inline-block;transform:scaleX(0.9585);transform-origin:0 0;">Filen...</span></div>
<div class="inp" style="left:71.5px;width:64px;height:11.4px;top:384.31px;"></div>
<div class="t" style="left:73.50px;top:386.53px;font-size:7px;color:#111;"><span style="display:inline-block;transform:scaleX(0.9095);transform-origin:0 0;">class mkiii fighter 3ds</span></div>
<div class="a" style="left:136.6px;top:383.71px;width:14.2px;height:12.4px;background:#050505;"></div>
<svg class="a" style="left:150.90px;top:385.61px" width="7.9" height="7.9" viewBox="0 0 8.4 8.4"><path d="M1.35 6.2 A3.35 3.35 0 1 1 7.05 6.2 Q4.2 7.9 1.35 6.2 Z" fill="#ececec" stroke="#1c1c1c" stroke-width="1.3" stroke-linejoin="round"/><circle cx="4.2" cy="4.4" r="1.0" fill="#2a2a2a"/></svg>
<div class="bar" style="top:399.48px;height:16.2px;background:linear-gradient(#a6d6d8,#96cbcd);border-color:#3c5c5e;"></div>
<div class="dot" style="left:21px;top:407.58px;width:4px;"></div>
<div class="tri" style="left:25.2px;top:405.68000000000006px;"></div>
<div class="t" style="left:34.50px;top:403.91px;font-size:8.1px;color:#262626;"><span style="display:inline-block;transform:scaleX(0.9978);transform-origin:0 0;">Transform 3D</span></div>
<svg class="a" style="left:151.70000000000002px;top:403.98px" width="7.2" height="7.2" viewBox="0 0 7.2 7.2"><circle cx="3.6" cy="3.6" r="3.05" fill="#f2f2f2" stroke="#6a6a6a" stroke-width="0.9"/><path d="M2.2 2.2 L5 5 M5 2.2 L2.2 5" stroke="#222" stroke-width="0.9"/></svg>
<svg class="a" style="left:134px;top:403.38px" width="12" height="9" viewBox="0 0 12 9"><rect x="0.6" y="2.4" width="8.6" height="6" fill="#e8e8e8" stroke="#666" stroke-width="0.8"/><path d="M0.6 4 H9.2" stroke="#666" stroke-width="0.8"/><path d="M8 0.6 L11.4 0.6 L11.4 4" stroke="#444" stroke-width="0.8" fill="none"/><circle cx="10.8" cy="1.3" r="0.9" fill="#444"/></svg>
<div class="a" style="left:176.1px;top:399.58px;width:0.9px;height:16px;background:#34555a;"></div>
<div class="a" style="left:174.3px;top:405.48px;width:4.4px;height:4.6px;border-radius:50%;background:#f2fafa;border:0.85px solid #2a4a50;box-sizing:border-box;"></div>
<div class="a" style="left:211.1px;top:399.58px;width:0.9px;height:16px;background:#34555a;"></div>
<div class="a" style="left:209.3px;top:405.48px;width:4.4px;height:4.6px;border-radius:50%;background:#f2fafa;border:0.85px solid #2a4a50;box-sizing:border-box;"></div>
<div class="a" style="left:240.6px;top:399.58px;width:0.9px;height:16px;background:#34555a;"></div>
<div class="a" style="left:238.8px;top:405.48px;width:4.4px;height:4.6px;border-radius:50%;background:#f2fafa;border:0.85px solid #2a4a50;box-sizing:border-box;"></div>
<div class="a" style="left:304.1px;top:399.58px;width:0.9px;height:16px;background:#34555a;"></div>
<div class="a" style="left:302.3px;top:405.48px;width:4.4px;height:4.6px;border-radius:50%;background:#f2fafa;border:0.85px solid #2a4a50;box-sizing:border-box;"></div>
<div class="a" style="left:349.6px;top:399.58px;width:0.9px;height:16px;background:#34555a;"></div>
<div class="a" style="left:347.8px;top:405.48px;width:4.4px;height:4.6px;border-radius:50%;background:#f2fafa;border:0.85px solid #2a4a50;box-sizing:border-box;"></div>
<div class="a" style="left:406.40000000000003px;top:399.58px;width:0.9px;height:16px;background:#34555a;"></div>
<div class="a" style="left:404.6px;top:405.48px;width:4.4px;height:4.6px;border-radius:50%;background:#f2fafa;border:0.85px solid #2a4a50;box-sizing:border-box;"></div>
<div class="bar" style="top:418.48px;height:13.3px;background:#9dd0d2;border-color:#3c5c5e;"></div>
<div class="a" style="left:211.05px;top:415.28px;width:0.9px;height:8px;background:#34555a;"></div>
<div class="a" style="left:240.55px;top:415.28px;width:0.9px;height:8px;background:#34555a;"></div>
<div class="a" style="left:304.05px;top:415.28px;width:0.9px;height:8px;background:#34555a;"></div>
<div class="a" style="left:349.55px;top:415.28px;width:0.9px;height:8px;background:#34555a;"></div>
<div class="a" style="left:406.35px;top:415.28px;width:0.9px;height:8px;background:#34555a;"></div>
<div class="inp" style="top:419.78px;"></div>
<div class="a" style="left:150px;top:420.08px;width:10px;height:1px;background:#888;"></div>
<div class="vdot" style="left:28.5px;top:409.28px;height:14px;"></div>
<div class="a" style="left:0;top:125px;width:176px;height:15.5px;background:#ece9d8;"></div>
<div class="a" style="left:0;top:140.3px;width:176px;height:1px;background:#c4c1b0;"></div>
<div class="t" style="left:35.8px;top:127.6px;font-size:12.4px;color:#111;">0</div>
<div class="tri" style="left:81px;top:132.6px;border-left-width:2.1px;border-right-width:2.1px;border-top-width:2.8px;"></div>
<div class="t" style="left:86.3px;top:131px;font-size:6px;font-weight:bold;color:#222;">00</div>
<svg class="a" style="left:104px;top:129px" width="14" height="9" viewBox="0 0 14 9"><path d="M2 0.5 V6 M0.4 4.4 L2 6.6 L3.6 4.4" stroke="#222" stroke-width="0.9" fill="none"/><rect x="5" y="1.6" width="8" height="5.6" fill="#e0ded2" stroke="#555" stroke-width="0.8"/></svg>
<svg class="a" style="left:121px;top:129px" width="15" height="9" viewBox="0 0 15 9"><path d="M0.6 2 L4.2 6.4 M4.2 2 L0.6 6.4" stroke="#b81818" stroke-width="1.2" fill="none"/><rect x="6" y="1.6" width="8" height="5.6" fill="#e0ded2" stroke="#555" stroke-width="0.8"/></svg>
<div class="a" style="left:143.4px;top:127px;width:18.6px;height:11.8px;background:#fefefd;border:1px solid #c4c2b4;border-right-color:#a8a698;border-bottom-color:#a8a698;box-sizing:border-box;border-radius:1.5px;"></div>
<svg class="a" style="left:148px;top:129.2px" width="12" height="9" viewBox="0 0 12 9"><path d="M0.9 0.6 H5.6 L7.4 2.4 V8.2 H0.9 Z" fill="#fff" stroke="#222" stroke-width="0.9"/><path d="M5 4 L10.6 4 M9.2 2.6 L10.8 4 L9.2 5.4" stroke="#333" stroke-width="0.8" fill="none"/></svg>
<div class="a" style="left:175.4px;top:126.9px;width:444.6px;height:1px;background:#6a6a60;"></div>
<div class="a" style="left:176px;top:127.9px;width:232.6px;height:12.6px;background:#fdfdfd;"></div>
<div class="a" style="left:408.6px;top:127.9px;width:211.4px;height:12.6px;background:#eeecd6;"></div>
<div class="a" style="left:176px;top:140.3px;width:444px;height:0.8px;background:#d8d6c4;"></div>
<div class="a" style="left:195.2px;top:127.9px;width:1.2px;height:4.2px;background:#3050b0;"></div>
<div class="a" style="left:198.8px;top:127.9px;width:1.2px;height:4.2px;background:#3050b0;"></div>
<div class="a" style="left:235.6px;top:127.9px;width:1.2px;height:4.4px;background:#3050b0;"></div>
<div class="a" style="left:276.2px;top:127.9px;width:1.2px;height:4.4px;background:#444;"></div>
<div class="a" style="left:284.8px;top:127.9px;width:1.2px;height:4.4px;background:#444;"></div>
<div class="a" style="left:324.3px;top:127.9px;width:1.2px;height:4.2px;background:#3050b0;"></div>
<div class="a" style="left:360.6px;top:127.9px;width:1.2px;height:4.4px;background:#2e3a70;"></div>
<div class="a" style="left:386.4px;top:127.9px;width:1.2px;height:4.4px;background:#2e3a70;"></div>
<div class="t" style="left:176.90px;top:132.73px;font-size:6.8px;color:#222;"><span style="display:inline-block;transform:scaleX(0.8387);transform-origin:0 0;">2:00</span></div>
<div class="a" style="left:176px;top:128.2px;width:2.6px;height:6.8px;border:1px solid #2030a0;border-radius:1.4px;box-sizing:border-box;"></div>
<div class="t" style="left:307.80px;top:133.53px;font-size:6.8px;color:#222;"><span style="display:inline-block;transform:scaleX(0.9671);transform-origin:0 0;">00:00:05</span></div>
<div class="t" style="left:453.00px;top:133.53px;font-size:6.8px;color:#222;"><span style="display:inline-block;transform:scaleX(0.9671);transform-origin:0 0;">00:00:10</span></div>
<div class="t" style="left:598.60px;top:133.53px;font-size:6.8px;color:#222;"><span style="display:inline-block;transform:scaleX(0.9671);transform-origin:0 0;">00:00:15</span></div>
<svg class="a" style="left:402.6px;top:131.6px" width="6" height="8" viewBox="0 0 6 8"><path d="M5.2 0.8 L1 4 L5.2 7.2 Z" fill="#f4f4f4" stroke="#444" stroke-width="0.9"/></svg>
<div class="a" style="left:162px;top:140.5px;width:14px;height:281.8px;background:#e9e7da;"></div>
<div class="a" style="left:165.2px;top:140.5px;width:9.8px;height:281.8px;background:#efede2;"></div>
<div class="a" style="left:165.2px;top:151px;width:9.8px;height:259px;background:#f8f7f1;"></div>
<div class="a" style="left:175px;top:126.2px;width:1.1px;height:296.1px;background:#77756a;"></div>
<svg class="a" style="left:168.1px;top:144.6px" width="4.8" height="3.1" viewBox="0 0 6 4"><path d="M3 0.3 L5.7 3.7 H0.3 Z" fill="#111"/></svg>
<svg class="a" style="left:167.9px;top:415px" width="4.8" height="3.1" viewBox="0 0 6 4"><path d="M3 3.7 L5.7 0.3 H0.3 Z" fill="#111"/></svg>
<div class="a" style="left:0;top:422.3px;width:620px;height:10.4px;background:#ece9d8;"></div>
<div class="a" style="left:176px;top:422.3px;width:444px;height:10.2px;background:linear-gradient(#fbfaf5,#f0eee2 40%,#e9e6d8);"></div>
<div class="a" style="left:176px;top:422.3px;width:10px;height:10.2px;background:#edebde;border-right:1px solid #dcd9ca;box-sizing:border-box;"></div>
<div class="a" style="left:601.6px;top:422.3px;width:5.4px;height:10.2px;background:#f4f2e8;border-left:1px solid #d4d1c0;border-right:1px solid #d4d1c0;box-sizing:border-box;"></div>
<svg class="a" style="left:179px;top:424.2px" width="3.6" height="5.4" viewBox="0 0 4 6"><path d="M0.3 3 L3.7 0.3 V5.7 Z" fill="#111"/></svg>
<svg class="a" style="left:612.4px;top:424.6px" width="3.6" height="5.4" viewBox="0 0 4 6"><path d="M3.7 3 L0.3 0.3 V5.7 Z" fill="#111"/></svg>
<div class="a" style="left:0;top:432.4px;width:620px;height:1px;background:#c8c5b4;"></div>
<div class="a" style="left:0;top:433.4px;width:620px;height:13.2px;background:#ece9d8;"></div>
<div class="a" style="left:0;top:433.4px;width:620px;height:1px;background:#f8f7f0;"></div>
<div class="a" style="left:607px;top:434px;width:1px;height:12px;background:#d2cfbe;"></div>
<div class="t" style="left:1.20px;top:436.86px;font-size:7.3px;color:#111;"><span style="display:inline-block;transform:scaleX(0.8530);transform-origin:0 0;">Ready</span></div><div class="a" style="left:0;top:446.4px;width:620px;height:18.6px;background:linear-gradient(#3f86f0 0%,#2a6be6 10%,#245fdc 30%,#2562de 70%,#1d4fc0 100%);"></div>
<div class="a" style="left:0;top:446.4px;width:57px;height:18.6px;border-radius:0 6px 7px 0;background:linear-gradient(#74bc74 0%,#42a042 14%,#379637 55%,#2c822c 100%);box-shadow:1px 0 2px #1a3a8a;"></div>
<svg class="a" style="left:6.6px;top:450.2px" width="10.4" height="11.4" viewBox="0 0 12 12"><path d="M1 2 Q3 1 5.4 2 L4.8 5.4 Q2.8 4.6 0.6 5.6 Z" fill="#e85a2a"/><path d="M6.4 2.2 Q8.6 3 11 2 L10.4 5.6 Q8.2 6.4 5.8 5.6 Z" fill="#7ac83a"/><path d="M0.4 6.6 Q2.6 5.6 4.6 6.4 L4 10 Q2 9.2 0 10.2 Z" fill="#4a8af0"/><path d="M5.6 6.6 Q7.8 7.4 10.2 6.6 L9.6 10.2 Q7.4 11 5 10.2 Z" fill="#f0d23a"/></svg>
<div class="t" style="left:20.40px;top:449.75px;font-size:11.2px;color:#fff;font-weight:bold;font-style:italic;text-shadow:0.6px 0.6px 0.5px #1a4a1a;"><span style="display:inline-block;transform:scaleX(0.9309);transform-origin:0 0;">start</span></div>
<div class="a" style="left:63.5px;top:448.6px;width:96.5px;height:14.6px;border-radius:1.6px;background:linear-gradient(#5a9af8 0%,#3c80f0 18%,#3a7cee 80%,#3270e0 100%);"></div>
<div class="a" style="left:69.5px;top:450.8px;width:8px;height:5px;background:#a84466;"></div><div class="a" style="left:69.5px;top:455.8px;width:8px;height:4.6px;background:#f4f4f8;"></div>
<div class="t" style="left:82.60px;top:452.22px;font-size:7px;color:#fff;"><span style="display:inline-block;transform:scaleX(0.9582);transform-origin:0 0;">T-Mobile Internet Ma...</span></div>
<div class="a" style="left:160.5px;top:448.6px;width:94px;height:14.6px;border-radius:1.6px;background:linear-gradient(#5a9af8 0%,#3c80f0 18%,#3a7cee 80%,#3270e0 100%);"></div>
<svg class="a" style="left:166.5px;top:451px" width="9" height="9" viewBox="0 0 9 9"><circle cx="4.5" cy="4.5" r="4.2" fill="#e8c83a"/><path d="M0.4 3.4 A4.2 4.2 0 0 1 8.6 3.4 Z" fill="#d84a3a"/><path d="M1 6.6 A4.2 4.2 0 0 0 4.5 8.7 L4.5 4.5 Z" fill="#4aa04a"/><circle cx="4.5" cy="4.5" r="1.7" fill="#5a8ae0" stroke="#fff" stroke-width="0.5"/></svg>
<div class="t" style="left:178.50px;top:452.22px;font-size:7px;color:#fff;"><span style="display:inline-block;transform:scaleX(0.9150);transform-origin:0 0;">Submit : Step By Step...</span></div>
<div class="a" style="left:257px;top:448.6px;width:97px;height:14.6px;border-radius:1.6px;background:linear-gradient(#1e52b8,#1a4aac 50%,#1c4eb0);"></div>
<svg class="a" style="left:263px;top:451px" width="10" height="10" viewBox="0 0 10 10"><rect x="0" y="0" width="10" height="10" fill="#e8e8e8"/><rect x="1" y="1" width="8" height="4" fill="#5a7fb0"/><rect x="1" y="5" width="8" height="4" fill="#3f8f3f"/><rect x="3" y="3" width="4" height="4" fill="#d8d8c0" opacity="0.8"/></svg>
<div class="t" style="left:275.00px;top:452.22px;font-size:7px;color:#fff;"><span style="display:inline-block;transform:scaleX(0.9270);transform-origin:0 0;">battlecruiser fighter b...</span></div>
<div class="a" style="left:355.5px;top:448.6px;width:95.5px;height:14.6px;border-radius:1.6px;background:linear-gradient(#5a9af8 0%,#3c80f0 18%,#3a7cee 80%,#3270e0 100%);"></div>
<svg class="a" style="left:361.5px;top:450.6px" width="8" height="10" viewBox="0 0 8 10"><path d="M1.5 3 H6.5 L5.8 9.5 H2.2 Z" fill="#d8a85a" stroke="#7a5a2a" stroke-width="0.5"/><path d="M2.4 3 V0.6 M4 3 V0.2 M5.6 3 V0.8" stroke="#c84a3a" stroke-width="0.9"/></svg>
<div class="t" style="left:373.00px;top:452.22px;font-size:7px;color:#fff;"><span style="display:inline-block;transform:scaleX(0.9250);transform-origin:0 0;">wax screenshot - Paint</span></div>
<div class="a" style="left:576px;top:446.4px;width:44px;height:18.6px;background:linear-gradient(#2e9cf0 0%,#1a8ae8 12%,#1684e4 60%,#1270c8 100%);border-left:1px solid #1a4aa8;"></div>
<div class="a" style="left:570px;top:451px;width:9px;height:9px;border-radius:50%;background:radial-gradient(#4ab0f8,#1a74d8);border:0.7px solid #9ad0fa;box-sizing:border-box;"></div>
<svg class="a" style="left:572px;top:453px" width="5" height="5" viewBox="0 0 5 5"><path d="M3.4 0.5 L1.2 2.5 L3.4 4.5" stroke="#fff" stroke-width="1.1" fill="none"/></svg>
<svg class="a" style="left:581.5px;top:450.6px" width="9" height="10" viewBox="0 0 9 10"><path d="M1 7 L5 1.5 L8 3.5 L6 6 Z" fill="#d8dce8" stroke="#444" stroke-width="0.5"/><path d="M1 7 L4 9.4 L6 6" fill="#c83a3a"/><circle cx="2.6" cy="3" r="1.3" fill="#f0f0f0"/></svg>
<div class="t" style="left:595.50px;top:452.22px;font-size:7px;color:#fff;"><span style="display:inline-block;transform:scaleX(0.9191);transform-origin:0 0;">16:31</span></div>
</div>
</body>
</html>
